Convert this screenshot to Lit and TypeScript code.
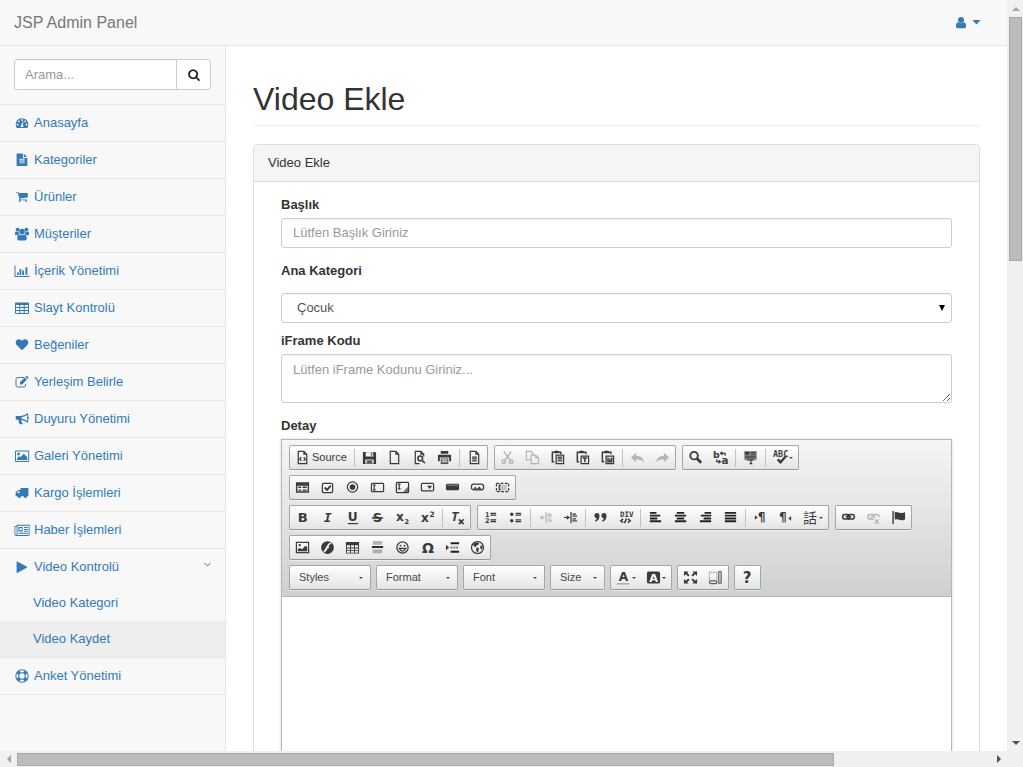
import { LitElement, html, svg, css, nothing, type TemplateResult } from "lit";
import { customElement, property } from "lit/decorators.js";
import { classMap } from "lit/directives/class-map.js";

type Drawing = TemplateResult;

/* Icons drawn on a 1792-unit grid, fitted into the 16 x 14 menu box. */
const glyph = (d: string): Drawing =>
  svg`<g transform="translate(1.7 .4) scale(.00703)"><path d=${d} /></g>`;

const MENU_ICONS: Record<string, Drawing> = {
  search: glyph(
    "M1216 832q0-185-131.5-316.5t-316.5-131.5-316.5 131.5-131.5 316.5 131.5 316.5 316.5 131.5 316.5-131.5 131.5-316.5zm512 832q0 52-38 90t-90 38q-54 0-90-38l-343-342q-179 124-399 124-143 0-273.5-55.5t-225-150-150-225-55.5-273.5 55.5-273.5 150-225 225-150 273.5-55.5 273.5 55.5 225 150 150 225 55.5 273.5q0 220-124 399l343 343q37 37 37 90z"
  ),
  dashboard: glyph(
    "M384 1152q0-53-37.5-90.5t-90.5-37.5-90.5 37.5-37.5 90.5 37.5 90.5 90.5 37.5 90.5-37.5 37.5-90.5zm192-448q0-53-37.5-90.5t-90.5-37.5-90.5 37.5-37.5 90.5 37.5 90.5 90.5 37.5 90.5-37.5 37.5-90.5zm428 481l101-382q6-26-7.5-48.5t-38.5-29.5-48 6.5-30 39.5l-101 382q-60 5-107 43.5t-63 98.5q-20 77 20 146t117 89 146-20 89-117q16-60-6-117t-72-91zm660-33q0-53-37.5-90.5t-90.5-37.5-90.5 37.5-37.5 90.5 37.5 90.5 90.5 37.5 90.5-37.5 37.5-90.5zm-640-640q0-53-37.5-90.5t-90.5-37.5-90.5 37.5-37.5 90.5 37.5 90.5 90.5 37.5 90.5-37.5 37.5-90.5zm448 192q0-53-37.5-90.5t-90.5-37.5-90.5 37.5-37.5 90.5 37.5 90.5 90.5 37.5 90.5-37.5 37.5-90.5zm320 448q0 261-141 483-19 29-54 29h-1402q-35 0-54-29-141-221-141-483 0-182 71-348t191-286 286-191 348-71 348 71 286 191 191 286 71 348z"
  ),
  file: glyph(
    "M1596 476q14 14 28 36h-472v-472q22 14 36 28zm-476 164h544v1056q0 40-28 68t-68 28h-1344q-40 0-68-28t-28-68v-1600q0-40 28-68t68-28h800v544q0 40 28 68t68 28zm160 736v-64q0-14-9-23t-23-9h-704q-14 0-23 9t-9 23v64q0 14 9 23t23 9h704q14 0 23-9t9-23zm0-256v-64q0-14-9-23t-23-9h-704q-14 0-23 9t-9 23v64q0 14 9 23t23 9h704q14 0 23-9t9-23zm0-256v-64q0-14-9-23t-23-9h-704q-14 0-23 9t-9 23v64q0 14 9 23t23 9h704q14 0 23-9t9-23z"
  ),
  cart: glyph(
    "M704 1536q0 52-38 90t-90 38-90-38-38-90 38-90 90-38 90 38 38 90zm896 0q0 52-38 90t-90 38-90-38-38-90 38-90 90-38 90 38 38 90zm128-1088v512q0 24-16.5 42.5t-40.5 21.5l-1044 122q13 60 13 70 0 16-24 64h920q26 0 45 19t19 45-19 45-45 19h-1024q-26 0-45-19t-19-45q0-11 8-31.5t16-36 21.5-40 15.5-29.5l-177-823h-204q-26 0-45-19t-19-45 19-45 45-19h256q16 0 28.5 6.5t19.5 15.5 13 24.5 8 26 5.5 29.5 4.5 26h1201q26 0 45 19t19 45z"
  ),
  heart: glyph(
    "M896 1664q-26 0-44-18l-624-602q-10-8-27.5-26t-55.5-65.5-68-97.5-53.5-121-23.5-138q0-220 127-344t351-124q62 0 126.5 21.5t120 58 95.5 68.5 76 68q36-36 76-68t95.5-68.5 120-58 126.5-21.5q224 0 351 124t127 344q0 221-229 450l-623 600q-18 18-44 18z"
  ),
  users: svg`<circle cx="3.600" cy="2.600" r="1.900"/><circle cx="12.400" cy="2.600" r="1.900"/><circle cx="8" cy="4.600" r="2.800"/>
    <path d="M1 7.600V6q0-1.600 1-1.600 1.500.7 2.700.1-.2 1.600.7 2.800Q4 7.400 3.300 8.300H2Q1 8.300 1 7.600zM15 7.600V6q0-1.600-1-1.600-1.500.7-2.700.1.2 1.600-.7 2.800Q12 7.400 12.700 8.300H14q1 0 1-.7zM3.200 11.500q0-4.100 2.400-4.100 2.400 1.600 4.800 0 2.400 0 2.400 4.100 0 1.900-1.800 1.900H5q-1.800 0-1.800-1.900z"/>`,
  chart: svg`<path d="M.5 1.500h1v10.500H15.500v1H.5zM3 8.500h1.800V11H3zM5.500 5h1.800v6H5.500zM8.200 6.500H10V11H8.200zM11.500 3.200h1.900V11h-1.900z"/>`,
  table: svg`<path fill-rule="evenodd" d="M2 1.500h12q1 0 1 1v9.500q0 1-1 1H2q-1 0-1-1V2.500q0-1 1-1zM2 4v2h3.300V4zM6.300 4v2h3.400V4zM10.700 4v2H14V4zM2 7v2h3.300V7zM6.300 7v2h3.400V7zM10.700 7v2H14V7zM2 10v2h3.300v-2zM6.300 10v2h3.400v-2zM10.700 10v2H14v-2z"/>`,
  edit: svg`<path fill="none" stroke="currentColor" stroke-width="1" d="M10.200 2.500H3.700Q2 2.500 2 4.200v6.100q0 1.700 1.700 1.700h6.200q1.700 0 1.700-1.700V9"/><path d="M6 7.200l4.700-4.800 2.200 2.200L8.200 9.400H6zM11.500 1.800l.8-.7q.4-.3.800 0l1.300 1.300q.3.400 0 .8l-.8.700z"/>`,
  horn: svg`<path fill-rule="evenodd" d="M1.600 5.200q0-1.100 1.100-1.100h4Q10.500 4 13.300 1.300q.9 0 .9.900v2.500q1 .4 1 1.100t-1 1.100v2.700q0 .9-.9.900Q10.800 8.400 7.700 7.900q-.8.700-.1 1.600-.3.800.7 1.400l.6.600q-.9 1.300-3.300.6Q4.600 10.200 4.500 7.700H2.700Q1.600 7.700 1.600 6.600zM13.200 2.700Q10.700 4.800 7.700 5.100v1.600q3 .3 5.500 2.300z"/>`,
  image: svg`<path fill-rule="evenodd" d="M2 1.500h12.200q1 0 1 1v9.500q0 1-1 1H2q-1 0-1-1V2.500q0-1 1-1zM2 2.500V12h12.200V2.500z"/><circle cx="4.500" cy="5" r="1.400"/><path d="M3 11V9.400l2.200-2.300 1.100 1.100 3.500-3.500 3.500 3.500V11z"/>`,
  truck: svg`<path fill-rule="evenodd" d="M6.500 2h7.900v8.300h-1.300a1.700 1.700 0 1 1-3.500 0H7a1.700 1.700 0 1 1-3.500 0H1.600V7.100q0-.7.500-1.200L3.800 4.300q.3-.3.900-.3h1.800zM3 7h2.500V5h-.8L3 6.700z"/>`,
  news: svg`<path fill-rule="evenodd" d="M2.600 1.800h13v9.900q0 1.200-1.200 1.200H2Q.5 12.900.5 11.500V3.100h2.100zM3.500 2.800V12h11.200V2.800zM1.300 4v7.300q.2.700.9.700l.4-.3V4zM4.500 4h4.200v4.400H4.500zM5.600 5v2.200h2.200V5zM10 4h3.800v1H10zM10 5.900h3.800v1H10zM10 7.700h3.800v1H10zM4.500 9.800h9.300v1H4.500z"/>`,
  play: svg`<path d="M3.300 1.400Q2.600 1.200 2.600 1.800v10.700q0 .6.600.4l9.800-5.400q.5-.4 0-.7z"/>`,
  ring: svg`<path fill-rule="evenodd" d="M8 .3a6.700 6.700 0 1 1 0 13.400A6.700 6.700 0 0 1 8 .3zM8 4.300a2.700 2.700 0 1 0 0 5.400 2.700 2.700 0 0 0 0-5.400zM5.400 1.900L6.700 3.400Q8 2.900 9.300 3.400l1.300-1.500Q8 .7 5.400 1.900zM5.400 12.100L6.700 10.600Q8 11.100 9.300 10.600l1.300 1.500Q8 13.300 5.400 12.100zM2.900 4.400Q1.700 7 2.900 9.600L4.400 8.300Q3.900 7 4.400 5.700zM13.100 4.400Q14.300 7 13.100 9.600L11.600 8.300Q12.100 7 11.600 5.700z"/>`,
  user: svg`<circle cx="8" cy="4" r="3"/><path d="M2.900 10.200q0-4 2.600-4Q8 8.200 10.500 6.200q2.600 0 2.600 4 0 2-1.700 2H4.600q-1.700 0-1.700-2z"/>`,
};

const page = svg`<path class="line" d="M3.500 1.500h6l3 3v10h-9zM9.500 1.500v3h3"/>`;
const clip = svg`<path class="bold" d="M4.500 12.500h-2v-10h9v2"/><path d="M4.500 1h1.500q1-1.500 2 0h1.500v2.500h-5z"/>`;
const ICONS: Record<string, Drawing> = {
  Source: svg`<g>${page}<path class="line" d="M6.700 7.500l-1.700 2 1.700 2M9.300 7.500l1.700 2-1.700 2"/></g>`,
  Save: svg`<path fill-rule="evenodd" d="M1 2h13l1 1v12H1zM4 2.500V7h8V2.500zM3.500 10v4.500h9V10z"/><path d="M9.500 3h1.500v3H9.500zM5 11h6v3.500H5z" opacity=".8"/>`,
  New: page,
  Preview: svg`<path class="line" d="M8 14.500H3.500v-13h6l3 3V7M9.500 1.500v3h3"/><circle class="bold" cx="8.800" cy="9" r="2.500"/><path class="bold" d="M10.800 11l3 3"/>`,
  Print: svg`<path d="M4 1h8v3H4zM1 5h14v7h-2V8H3v4H1z"/><path d="M4 9h8v6H4z" opacity=".85"/><path stroke="#fff" d="M5 10.500h6M5 12.500h6"/>`,
  Templates: svg`${page}<path class="line" d="M5.500 7.500h5M5.500 9.500h5M5.500 11.500h5"/>`,
  Cut: svg`<path class="bold" d="M4 1.500l6.500 9M12 1.500l-6.500 9"/><circle class="bold" cx="4" cy="12.500" r="1.800"/><circle class="bold" cx="12" cy="12.500" r="1.800"/>`,
  Copy: svg`<path class="line" d="M5.500 10.500h-4v-9h5l2 2v2M6.500 5.500h5l3 3v6h-8zM11.500 5.500v3h3"/>`,
  Paste: svg`${clip}<path class="fillw" d="M6.500 5.500h8v9h-8z"/><path class="line" d="M8 7.500h5M8 9.500h5M8 11.500h5"/>`,
  "Paste text": svg`${clip}<path class="fillw" d="M6.500 6.500h8v8h-8z"/><path class="bold" d="M8 8.500h5M10.500 8.500V13"/>`,
  "Paste from Word": svg`${clip}<path class="fillw" d="M6.500 6.500h8v8h-8z"/><path class="bold" d="M8.500 8v4.500h4V8M10.500 9v3"/>`,
  Undo: svg`<path d="M1 8l5.500-5v3Q14 6 15 13 11.500 9.500 6.500 10v3z"/>`,
  Redo: svg`<path d="M15 8L9.500 3v3Q2 6 1 13q3.500-3.500 8.500-3v3z"/>`,
  Find: svg`<circle cx="6.500" cy="6" r="4" fill="none" stroke="currentColor" stroke-width="2"/><path d="M9.500 9l4.500 4.500" stroke="currentColor" stroke-width="3"/>`,
  Replace: svg`<text x="0" y="8" font-size="10">b</text><text x="9" y="15" font-size="11">a</text><path class="line" d="M9 3.500h4V6M4 10v2.500h3"/><path d="M10 1v5L7 3.500zM6 10v5l3-2.500z"/>`,
  "Select all": svg`<path d="M1 1h14v10H1z" opacity=".35"/><path class="line" d="M2 2.500h5M8 4.500h6M8 2.500h6M2 6.500h12M2 8.500h12M4 10.500h8"/><path d="M2 2h5v3H2z"/><path class="line" d="M8.500 10v5M7 14.500h3"/>`,
  Spell: svg`<text class="mono" x="0" y="7.500" font-size="9">ABC</text><path d="M5 10l3 3 5.500-6" fill="none" stroke="currentColor" stroke-width="2.500"/>`,
  Form: svg`<path fill-rule="evenodd" d="M1 2.500h14v11H1zM2.500 6v6h11V6z"/><path d="M3.500 7h3v1.500h-3zM3.500 10h3v1.500h-3zM8 7h4.500v1.500H8zM8 10h4.500v1.500H8z"/>`,
  Checkbox: svg`<rect class="line" x="2.500" y="3.500" width="11" height="10" rx="1.500"/><path d="M5 8l2.500 2.500L11.500 6" fill="none" stroke="currentColor" stroke-width="2"/>`,
  Radio: svg`<circle class="line" cx="8" cy="7.500" r="5.500"/><circle cx="8" cy="7.500" r="3"/>`,
  "Text field": svg`<rect class="line" x="1.500" y="3.500" width="13" height="9" rx="1"/><path class="line" d="M3 5.500h3M4.500 5.500v5M3 10.500h3"/>`,
  Textarea: svg`<rect class="line" x="1.500" y="2.500" width="13" height="11" rx="1"/><path class="line" d="M3 4.500h3M4.500 4.500v5M3 9.500h3"/><path d="M14 7v6.500H8z" opacity=".7"/>`,
  "Selection field": svg`<rect class="line" x="1.500" y="3.500" width="13" height="8" rx="1"/><path d="M7.500 6h5.500L10.200 9.500z"/>`,
  Button: svg`<rect x="1" y="4" width="14" height="7" rx="1.500"/><path d="M2 5.500h12" stroke="#999"/>`,
  "Image button": svg`<rect class="line" x="1.500" y="4.500" width="13" height="6" rx="2.500"/><path d="M3.500 10l2-3 2 2.500L10 7l2.500 3z"/>`,
  "Hidden field": svg`<rect class="line" x="1.500" y="3.500" width="13" height="9" stroke-dasharray="3 1.500"/><path d="M4 5h8.500v6H4z" opacity=".25"/><path class="line" d="M4 5.500h2M4.500 5.500v5M4 10.500h2"/>`,
  Bold: svg`<text x="3" y="13" font-size="14">B</text>`,
  Italic: svg`<text class="mono" x="4" y="13" font-size="14" font-style="italic">I</text>`,
  Underline: svg`<text x="3" y="12" font-size="13">U</text><path class="line" d="M3 14.500h11"/>`,
  Strike: svg`<text x="3" y="13" font-size="14">S</text><path class="bold" d="M2 8.500h12"/>`,
  Subscript: svg`<text x="1" y="12" font-size="13">x</text><text x="10" y="15" font-size="7">2</text>`,
  Superscript: svg`<text x="1" y="13" font-size="13">x</text><text x="10" y="7" font-size="8">2</text>`,
  "Remove format": svg`<text class="mono" x="1" y="12" font-size="14" font-style="italic">T</text><path d="M9.500 10l5 5M14.500 10l-5 5" fill="none" stroke="currentColor" stroke-width="1.800"/>`,
  "Numbered list": svg`<text x="2" y="7" font-size="7">1</text><text x="2" y="14" font-size="7">2</text><path class="line" d="M8 3.500h6M8 5.500h6M8 10.500h6M8 12.500h6"/>`,
  "Bulleted list": svg`<circle cx="4" cy="4.500" r="1.800"/><circle cx="4" cy="11.500" r="1.800"/><path class="line" d="M8 3.500h6M8 5.500h6M8 10.500h6M8 12.500h6"/>`,
  Outdent: svg`<path class="line" d="M8.500 2v12M10 4.500h4M10 6.500h5M10 9.500h4M10 11.500h5M3 8h4"/><path d="M5 5.500v5L1.500 8z"/>`,
  Indent: svg`<path class="line" d="M8.500 2v12M10 4.500h4M10 6.500h5M10 9.500h4M10 11.500h5M1 8h4"/><path d="M4 5.500v5L7.500 8z"/>`,
  Quote: svg`<path d="M1.500 6a2.700 2.700 0 1 1 5.400 0q0 4.500-4 6.500l-.7-1.200Q4 10 4 8.700 1.500 8.500 1.500 6zM9 6a2.700 2.700 0 1 1 5.400 0q0 4.500-4 6.500l-.7-1.200q1.800-1.300 1.800-2.600Q9 8.500 9 6z"/>`,
  Div: svg`<text class="mono" x="2" y="7.500" font-size="8">DIV</text><path class="bold" d="M5.500 9.500l-2.500 2 2.500 2M9 9l-2 5M10.500 9.500l2.500 2-2.500 2"/>`,
  "Align left": svg`<path class="bar" d="M2 3h7M2 6h11M2 9h8M2 12h12"/>`,
  Center: svg`<path class="bar" d="M4 3h8M2 6h12M4 9h8M2 12h12"/>`,
  "Align right": svg`<path class="bar" d="M7 3h7M3 6h11M6 9h8M2 12h12"/>`,
  Justify: svg`<path class="bar" d="M2 3h12M2 6h12M2 9h12M2 12h12"/>`,
  "Left to right": svg`<text x="5" y="12" font-size="13">¶</text><path d="M2 5.500v5L5 8z"/>`,
  "Right to left": svg`<text x="1" y="12" font-size="13">¶</text><path d="M14 6.500v5L11 9z"/>`,
  Language: svg`<text class="cjk" x="0" y="14" font-size="15">話</text>`,
  Link: svg`<rect class="bold" x="1.700" y="4.700" width="7.500" height="5" rx="2.500"/><rect class="bold" x="6.800" y="4.700" width="7.500" height="5" rx="2.500"/><path class="bold" d="M5 7.200h6"/>`,
  Unlink: svg`<path class="bold" d="M8 9.700H4.500a2.500 2.500 0 0 1 0-5H7a2.500 2.500 0 0 1 2 2.500M9 4.700h2.500a2.500 2.500 0 0 1 2.500 3M5 7.200h5M9.500 10l4 4.500M13.500 10l-4 4.500"/>`,
  Anchor: svg`<path d="M1.500 1H3v14H1.500zM4 2q3 0 5 1 3 .8 6-.5V10q-3 1.500-6 .5Q7 9.500 4 10z"/>`,
  Image: svg`<rect class="line" x="1.500" y="2.500" width="13" height="11"/><circle cx="5" cy="5.500" r="1.200"/><path d="M3 12V9.500l2.500-1L7.500 10 11 6l2 1.500V12z"/>`,
  Flash: svg`<circle cx="8" cy="8" r="6.800"/><path d="M12 3.500Q8.500 4 8 8H6.500M9.500 7.500h-2Q6.500 11.500 4 12.500" fill="none" stroke="#f4f4f4" stroke-width="1.800"/>`,
  Table: svg`<path fill-rule="evenodd" d="M1 2h14v12.500H1zM2 5.500V8h3.300V5.500zM6.300 5.500V8h3.400V5.500zM10.700 5.500V8H14V5.500zM2 9v1.800h3.300V9zM6.300 9v1.800h3.400V9zM10.700 9v1.800H14V9zM2 11.800v1.700h3.300v-1.700zM6.300 11.800v1.700h3.400v-1.700zM10.700 11.800v1.700H14v-1.700z"/>`,
  "Horizontal line": svg`<path d="M3 1h10v4H3zM3 10h10v4H3z" opacity=".35"/><path class="bar" d="M2 7.500h12"/>`,
  Smiley: svg`<circle class="line" cx="8" cy="8" r="6"/><circle cx="5.800" cy="6" r="1"/><circle cx="10.200" cy="6" r="1"/><path class="line" d="M4.500 9Q8 14.500 11.500 9z"/>`,
  Omega: svg`<text x="2" y="14" font-size="15">Ω</text>`,
  "Page break": svg`<path class="bar" d="M6 3.500h9M6 12.500h9"/><path class="bar" opacity=".6" stroke-dasharray="2 1" d="M6 8h9"/><path d="M1 5v6l3.500-3z"/>`,
  IFrame: svg`<circle class="line" cx="8" cy="8" r="6.400"/><path d="M3 5l3-2.500 4 .5-1 2-2 .5L6.500 7.500 4.500 7zM7 8l2.500.5L9 12l-1.500 1.500L6.500 10zM11 6l2-.5.500 2.500-1 2.500-1.500-1.500z"/>`,
  "Text color": svg`<text x="3" y="12" font-size="13">A</text><path d="M1 14h13v1.500H1z" opacity=".4"/>`,
  "Background color": svg`<rect x="1" y="1.500" width="14" height="13" rx="2"/><text class="light" x="3.500" y="12.500" font-size="12">A</text>`,
  Maximize: svg`<path d="M1 1.500h5L4.500 3 7 5.500 5.500 7 3 4.500 1 6.500zM15 1.500v5l-2-2L10.500 7 9 5.500 11.500 3 10 1.500zM1 14.500v-5l2 2L5.500 9 7 10.500 4.500 13 6 14.500zM15 14.500h-5l1.500-1.500L9 10.500 10.500 9l2.500 2.500 2-2z"/>`,
  "Show blocks": svg`<path class="line" opacity=".6" stroke-dasharray="1 1" d="M1.500 11V2.500h8V11"/><rect class="line" opacity=".8" x="1.500" y="11.500" width="8" height="3" rx="1.500"/><rect class="line" opacity=".8" x="11.500" y="1.500" width="2.500" height="13" rx="1.200"/>`,
  About: svg`<text x="3" y="14" font-size="16">?</text>`,
};

type Item = string;
/* "|" is a separator, a leading "-" greys a button out, "~v" adds a drop arrow, "*" makes a drop-down. */
const TOOLBAR: Item[][][] = [
  [
    ["Source", "|", "Save", "New", "Preview", "Print", "|", "Templates"],
    ["-Cut", "-Copy", "Paste", "Paste text", "Paste from Word", "|", "-Undo", "-Redo"],
    ["Find", "Replace", "|", "Select all", "|", "Spell~v"],
  ],
  [["Form", "Checkbox", "Radio", "Text field", "Textarea", "Selection field", "Button", "Image button", "Hidden field"]],
  [
    ["Bold", "Italic", "Underline", "Strike", "Subscript", "Superscript", "|", "Remove format"],
    ["Numbered list", "Bulleted list", "|", "-Outdent", "Indent", "|", "Quote", "Div", "|", "Align left", "Center", "Align right", "Justify", "|", "Left to right", "Right to left", "Language~v"],
    ["Link", "-Unlink", "Anchor"],
  ],
  [["Image", "Flash", "Table", "Horizontal line", "Smiley", "Omega", "Page break", "IFrame"]],
  [
    ["Styles*"], ["Format*"], ["Font*"], ["Size*"],
    ["Text color~v", "Background color~v"],
    ["Maximize", "Show blocks"],
    ["About"],
  ],
];

@customElement("rich-editor")
export class RichEditor extends LitElement {
  static formAssociated = true;

  static styles = css`
    :host { display: block; border: 1px solid #b6b6b6; box-shadow: 0 0 3px rgba(0, 0, 0, 0.15); }
    .tools { display: flex; flex-direction: column; gap: 5px; padding: 5px 7px 6px; border-bottom: 1px solid #b6b6b6; background: linear-gradient(#f5f5f5, #cfd1cf); }
    .row { display: flex; flex-wrap: wrap; gap: 5px; }
    .row:nth-child(odd) { column-gap: 6px; }
    .row:last-child { column-gap: 5px; }
    .group { display: flex; align-items: center; box-sizing: border-box; height: 25px; border: 1px solid #a6a6a6; border-bottom-color: #979797; border-radius: 2px; background: linear-gradient(#fff, #e4e4e4); box-shadow: 0 1px 0 rgba(255, 255, 255, 0.5); }
    button { display: flex; align-items: center; gap: 2px; margin: 0; border: 0; padding: 4px 5px; background: none; color: #3a3a3a; font: 11px "Liberation Sans", Arial, sans-serif; line-height: 15px; }
    button:disabled { color: #b5b5b5; }
    .icon { display: block; width: 15px; height: 15px; fill: currentColor; overflow: visible; flex: none; }
    .icon text { font-family: "DejaVu Sans", sans-serif; font-weight: bold; }
    .icon .mono { font-family: "DejaVu Sans Mono", monospace; }
    .icon .cjk { font-family: "Noto Sans CJK TC", sans-serif; font-weight: normal; }
    .icon .light { fill: #fff; }
    .line { fill: none; stroke: currentColor; stroke-width: 1.3; }
    .bold { fill: none; stroke: currentColor; stroke-width: 1.6; }
    .bar { fill: none; stroke: #222; stroke-width: 2; }
    .fillw { fill: #eee; stroke: currentColor; stroke-width: 1.3; }
    .sep { width: 1px; height: 18px; margin: 0 2px; background: #c0c0c0; }
    .drop { width: 0; border: 2px solid transparent; border-top-color: #474747; border-bottom: 0; margin-left: -1px; }
    .combo { position: relative; display: flex; align-items: center; }
    .combo .drop { position: absolute; right: 7px; pointer-events: none; }
    select { appearance: none; width: 80px; height: 23px; border: 0; margin: 0; padding: 0 9px 2px; background: none; color: #474747; font: 11px "Liberation Sans", Arial, sans-serif; }
    .short { width: 53px; }
    .area { min-height: 220px; background: #fff; outline: none; }
  `;

  private item(name: Item) {
    if (name === "|") return html`<span class="sep"></span>`;
    if (name.endsWith("*")) {
      const label = name.slice(0, -1);
      return html`<span class="combo">
        <select aria-label=${label} class=${classMap({ short: label === "Size" })}><option>${label}</option></select>
        <span class="drop"></span>
      </span>`;
    }
    const off = name.startsWith("-");
    const drop = name.endsWith("~v");
    const key = name.replace(/^-/, "").replace("~v", "");
    return html`<button type="button" title=${key} ?disabled=${off}>
      <svg class="icon" viewBox="0 0 16 16" aria-hidden="true">${ICONS[key]}</svg>
      ${key === "Source" ? html`<span>Source</span>` : nothing}
      ${drop ? html`<span class="drop"></span>` : nothing}
    </button>`;
  }

  render() {
    return html`
      <div class="tools" role="toolbar">
        ${TOOLBAR.map(
          (row) => html`<div class="row">
            ${row.map((group) => html`<div class="group">${group.map((i) => this.item(i))}</div>`)}
          </div>`
        )}
      </div>
      <div class="area" contenteditable="true" role="textbox" aria-label="Detay"></div>
    `;
  }
}

@customElement("scroll-track")
export class ScrollTrack extends LitElement {
  @property({ type: Boolean, reflect: true }) horizontal = false;
  @property({ type: Number }) size = 50;

  static styles = css`
    :host { display: flex; flex-direction: column; background: #f0f0f0; min-width: 0; min-height: 0; }
    :host([horizontal]) { flex-direction: row; }
    .end { flex: none; display: grid; place-items: center; width: 17px; height: 17px; }
    :host([horizontal]) .end { height: 16px; }
    .run { flex: 1; padding: 0 1px 0 2px; }
    :host([horizontal]) .run { padding: 2px 0 1px; }
    .thumb { box-sizing: border-box; background: #bcbcbc; border: 1px solid #a8a8a8; width: 100%; height: 100%; }
    svg { display: block; width: 8px; height: 8px; fill: #505050; }
    .start { fill: #a3a3a3; }
  `;

  render() {
    const side = this.horizontal ? "width" : "height";
    return html`
      <div class="end"><svg class="start" viewBox="0 0 8 8"><path d=${this.horizontal ? "M6 0v8L2 4z" : "M0 6h8L4 2z"} /></svg></div>
      <div class="run"><div class="thumb" style="${side}:${this.size}%"></div></div>
      <div class="end"><svg viewBox="0 0 8 8"><path d=${this.horizontal ? "M2 0v8l4-4z" : "M0 2h8L4 6z"} /></svg></div>
    `;
  }
}

const MENU: [string, string][] = [
  ["dashboard", "Anasayfa"],
  ["file", "Kategoriler"],
  ["cart", "Ürünler"],
  ["users", "Müşteriler"],
  ["chart", "İçerik Yönetimi"],
  ["table", "Slayt Kontrolü"],
  ["heart", "Beğeniler"],
  ["edit", "Yerleşim Belirle"],
  ["horn", "Duyuru Yönetimi"],
  ["image", "Galeri Yönetimi"],
  ["truck", "Kargo İşlemleri"],
  ["news", "Haber İşlemleri"],
  ["play", "Video Kontrolü"],
  ["ring", "Anket Yönetimi"],
];

@customElement("app-root")
export class AppRoot extends LitElement {
  static styles = css`
    :host { display: grid; grid-template: minmax(0, 1fr) 16px / minmax(0, 1fr) 16px; height: 100vh; overflow: hidden; background: #f0f0f0; color: #333; font: 13px/18px "Liberation Sans", Arial, sans-serif; }
    .page { display: grid; grid-template: auto minmax(0, 1fr) / 226px minmax(0, 1fr); overflow: hidden; background: #fff; }
    a { color: #337ab7; text-decoration: none; }
    header { grid-column: 1 / -1; display: flex; align-items: center; justify-content: space-between; height: 45px; padding: 0 26px 0 14px; border-bottom: 1px solid #e7e7e7; background: #f8f8f8; }
    .brand { color: #777; font-size: 16px; line-height: 20px; }
    .account { display: flex; align-items: center; gap: 3px; border: 0; padding: 0; background: none; color: #337ab7; }
    .icon { display: block; flex: none; width: 16px; height: 14px; fill: currentColor; }
    .caret { width: 9px; height: 5px; fill: currentColor; }
    nav { border-right: 1px solid #e7e7e7; background: #f8f8f8; overflow: hidden; }
    .search { display: flex; padding: 13px 14px 14px; border-bottom: 1px solid #e7e7e7; }
    .control { box-sizing: border-box; display: block; width: 100%; height: 30px; margin: 0; border: 1px solid #ccc; border-radius: 3px; padding: 4px 11px 6px; background: #fff; box-shadow: inset 0 1px 1px rgba(0, 0, 0, 0.04); color: #555; font: inherit; }
    .control::placeholder { color: #999; opacity: 1; }
    .search .control { flex: 1; min-width: 0; height: 31px; padding: 5px 10px; border-radius: 3px 0 0 3px; }
    .go { display: grid; place-items: center; width: 35px; margin-left: -1px; border: 1px solid #ccc; border-radius: 0 3px 3px 0; padding: 0; background: #fff; color: #222; }
    ul { list-style: none; margin: 0; padding: 0; }
    .entry { border-bottom: 1px solid #e7e7e7; }
    .link { display: flex; align-items: center; gap: 4px; height: 36px; padding: 0 13px 0 14px; }
    .arrow { width: 9px; height: 6px; margin: 0 0 4px auto; fill: none; stroke: currentColor; }
    .sub { display: flex; align-items: center; height: 36px; padding-left: 33px; }
    .active { background: #eee; }
    main { padding: 36px 27px 0; overflow: hidden; }
    h1 { margin: 0 0 18px; padding-bottom: 8px; border-bottom: 1px solid #eee; font-size: 32px; line-height: 35px; font-weight: 500; }
    .panel { border: 1px solid #ddd; border-radius: 4px; }
    .title { padding: 9px 14px; border-bottom: 1px solid #ddd; border-radius: 3px 3px 0 0; background: #f5f5f5; }
    .body { padding: 14px 27px; }
    label { display: block; margin-bottom: 4px; font-weight: bold; }
    .field { margin-bottom: 14px; }
    .category { margin-bottom: 9px; }
    .category label { margin-bottom: 13px; }
    .picker { position: relative; }
    .picker .control { appearance: none; padding: 0 15px; }
    .picker svg { position: absolute; right: 7px; top: 12px; width: 6px; height: 6px; pointer-events: none; }
    textarea.control { height: 49px; padding-top: 6px; resize: vertical; }
  `;

  private entry([icon, text]: [string, string]) {
    const open = icon === "play";
    return html`<li class="entry">
      <a class="link" href="#">
        <svg class="icon" viewBox="0 0 16 14" aria-hidden="true">${MENU_ICONS[icon]}</svg>${text}
        ${open ? html`<svg class="arrow" viewBox="0 0 9 6"><path d="M1.500 1l3 3 3-3" /></svg>` : nothing}
      </a>
      ${open
        ? html`<ul>
            <li><a class="sub" href="#">Video Kategori</a></li>
            <li><a class="sub active" href="#">Video Kaydet</a></li>
          </ul>`
        : nothing}
    </li>`;
  }

  render() {
    return html`
      <div class="page">
        <header>
          <a class="brand" href="#">JSP Admin Panel</a>
          <button class="account" type="button" aria-label="Hesap">
            <svg class="icon" viewBox="0 0 16 14">${MENU_ICONS.user}</svg>
            <svg class="caret" viewBox="0 0 9 5"><path d="M.5 0h8l-4 4.500z" /></svg>
          </button>
        </header>
        <nav>
          <div class="search">
            <input class="control" type="text" placeholder="Arama..." aria-label="Arama" />
            <button class="go" type="button" aria-label="Ara"><svg class="icon" viewBox="0 0 16 14">${MENU_ICONS.search}</svg></button>
          </div>
          <ul>${MENU.map((m) => this.entry(m))}</ul>
        </nav>
        <main>
          <h1>Video Ekle</h1>
          <section class="panel">
            <div class="title">Video Ekle</div>
            <form class="body">
              <div class="field">
                <label for="title">Başlık</label>
                <input class="control" id="title" type="text" placeholder="Lütfen Başlık Giriniz" />
              </div>
              <div class="category">
                <label for="category">Ana Kategori</label>
                <div class="picker">
                  <select class="control" id="category"><option>Çocuk</option></select>
                  <svg viewBox="0 0 6 6"><path d="M0 0h6L3 6z" /></svg>
                </div>
              </div>
              <div class="field">
                <label for="code">iFrame Kodu</label>
                <textarea class="control" id="code" placeholder="Lütfen iFrame Kodunu Giriniz..."></textarea>
              </div>
              <label for="detail">Detay</label>
              <rich-editor id="detail"></rich-editor>
            </form>
          </section>
        </main>
      </div>
      <scroll-track .size=${34}></scroll-track>
      <scroll-track horizontal .size=${84}></scroll-track>
    `;
  }
}
